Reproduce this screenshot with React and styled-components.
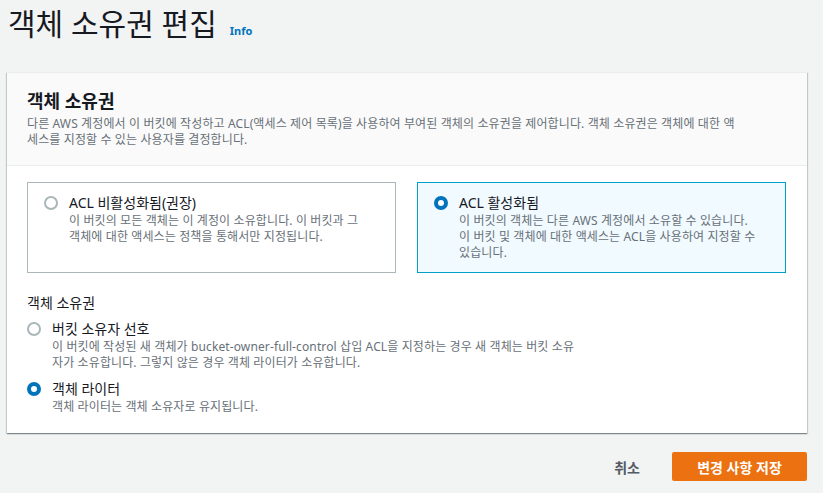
import React, { useState } from 'react';
import styled, { createGlobalStyle } from 'styled-components';

const GlobalStyle = createGlobalStyle`
  html, body {
    margin: 0;
    padding: 0;
    background: #f2f3f3;
  }
  body {
    font-family: "Noto Sans", "Noto Sans CJK KR", sans-serif;
    color: #16191f;
  }
`;

const Page = styled.div`
  width: 800px;
  padding: 4px 0 0 7px;
`;

const Header = styled.div`
  display: flex;
  align-items: baseline;
  gap: 13px;
  height: 40px;
  padding-left: 1px;
  margin-bottom: 28px;
`;

const PageTitle = styled.h1`
  margin: 0;
  font-size: 30px;
  font-weight: 400;
  line-height: 40px;
`;

const InfoLink = styled.a`
  font-size: 11px;
  font-weight: 700;
  color: #0073bb;
  text-decoration: none;
`;

const Panel = styled.section`
  background: #fff;
  border-top: 1px solid #eaeded;
  box-shadow: 0 1px 1px 0 rgba(0, 28, 36, 0.3), 1px 1px 1px 0 rgba(0, 28, 36, 0.15),
    -1px 1px 1px 0 rgba(0, 28, 36, 0.15);
`;

const PanelHead = styled.div`
  background: #fafafa;
  border-bottom: 1px solid #eaeded;
  padding: 15px 20px 17px;
`;

const PanelTitle = styled.h2`
  margin: 0 0 2px;
  font-size: 18px;
  font-weight: 700;
  line-height: 26px;
`;

const Desc = styled.p`
  margin: 0;
  font-size: 12px;
  line-height: 16px;
  color: #687078;
  letter-spacing: 0.12px;
`;

const PanelBody = styled.div`
  padding: 16px 21px 18px 20px;
`;

const Tiles = styled.div`
  display: grid;
  grid-template-columns: 1fr 1fr;
  gap: 21px;
  margin-bottom: 20px;
`;

const Tile = styled.label`
  display: flex;
  gap: 11px;
  height: 91px;
  box-sizing: border-box;
  padding: 10px 16px;
  border: 1px solid ${({ $on }) => ($on ? '#00a1c9' : '#aab7b8')};
  background: ${({ $on }) => ($on ? '#f1faff' : '#fff')};
  cursor: pointer;
`;

const Radio = styled.span`
  flex: none;
  width: 14px;
  height: 14px;
  margin-top: 3px;
  box-sizing: border-box;
  border-radius: 50%;
  background: #fff;
  border: ${({ $on }) => ($on ? '4px solid #0073bb' : '2px solid #aab7b8')};
`;

const OptText = styled.div`
  display: flex;
  flex-direction: column;
`;

const OptLabel = styled.span`
  font-size: 14px;
  line-height: 20px;
`;

const FieldLabel = styled.div`
  font-size: 14px;
  line-height: 20px;
  margin-bottom: 6px;
`;

const Option = styled.label`
  display: flex;
  gap: 11px;
  margin-bottom: ${({ $last }) => ($last ? '0' : '8px')};
  cursor: pointer;
`;

const Footer = styled.div`
  display: flex;
  justify-content: flex-end;
  align-items: center;
  gap: 32px;
  padding-top: 19px;
`;

const LinkButton = styled.button`
  border: none;
  background: none;
  font: inherit;
  font-size: 14px;
  font-weight: 700;
  color: #545b64;
  padding: 0;
  cursor: pointer;
`;

const PrimaryButton = styled.button`
  height: 29px;
  width: 135px;
  border: none;
  border-radius: 2px;
  background: #ec7211;
  color: #fff;
  font: inherit;
  font-size: 14px;
  font-weight: 700;
  cursor: pointer;
`;

export default function App() {
  const [acl, setAcl] = useState('on');
  const [owner, setOwner] = useState('writer');

  return (
    <>
      <GlobalStyle />
      <Page>
        <Header>
          <PageTitle>객체 소유권 편집</PageTitle>
          <InfoLink href="#">Info</InfoLink>
        </Header>
        <Panel>
          <PanelHead>
            <PanelTitle>객체 소유권</PanelTitle>
            <Desc>
              다른 AWS 계정에서 이 버킷에 작성하고 ACL(액세스 제어 목록)을 사용하여 부여된 객체의 소유권을 제어합니다. 객체 소유권은 객체에 대한 액
              <br />
              세스를 지정할 수 있는 사용자를 결정합니다.
            </Desc>
          </PanelHead>
          <PanelBody>
            <Tiles>
              <Tile $on={acl === 'off'} onClick={() => setAcl('off')}>
                <Radio $on={acl === 'off'} />
                <OptText>
                  <OptLabel>ACL 비활성화됨(권장)</OptLabel>
                  <Desc>
                    이 버킷의 모든 객체는 이 계정이 소유합니다. 이 버킷과 그
                    <br />
                    객체에 대한 액세스는 정책을 통해서만 지정됩니다.
                  </Desc>
                </OptText>
              </Tile>
              <Tile $on={acl === 'on'} onClick={() => setAcl('on')}>
                <Radio $on={acl === 'on'} />
                <OptText>
                  <OptLabel>ACL 활성화됨</OptLabel>
                  <Desc>
                    이 버킷의 객체는 다른 AWS 계정에서 소유할 수 있습니다.
                    <br />
                    이 버킷 및 객체에 대한 액세스는 ACL을 사용하여 지정할 수
                    <br />
                    있습니다.
                  </Desc>
                </OptText>
              </Tile>
            </Tiles>
            <FieldLabel>객체 소유권</FieldLabel>
            <Option onClick={() => setOwner('bucket')}>
              <Radio $on={owner === 'bucket'} />
              <OptText>
                <OptLabel>버킷 소유자 선호</OptLabel>
                <Desc>
                  이 버킷에 작성된 새 객체가 bucket-owner-full-control 삽입 ACL을 지정하는 경우 새 객체는 버킷 소유
                  <br />
                  자가 소유합니다. 그렇지 않은 경우 객체 라이터가 소유합니다.
                </Desc>
              </OptText>
            </Option>
            <Option $last onClick={() => setOwner('writer')}>
              <Radio $on={owner === 'writer'} />
              <OptText>
                <OptLabel>객체 라이터</OptLabel>
                <Desc>객체 라이터는 객체 소유자로 유지됩니다.</Desc>
              </OptText>
            </Option>
          </PanelBody>
        </Panel>
        <Footer>
          <LinkButton>취소</LinkButton>
          <PrimaryButton>변경 사항 저장</PrimaryButton>
        </Footer>
      </Page>
    </>
  );
}
